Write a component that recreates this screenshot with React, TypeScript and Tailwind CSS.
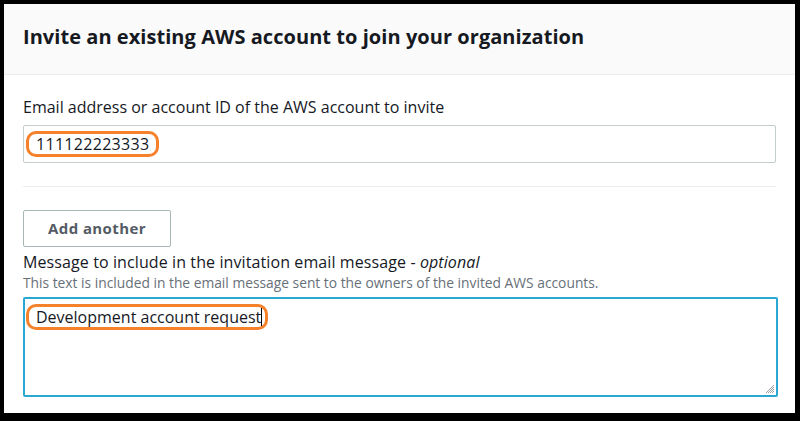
import React from "react";

const font = { fontFamily: '"Open Sans", "Noto Sans", Arial, sans-serif' };

export default function App() {
  return (
    <div
      className="w-[800px] h-[421px] bg-white border-t-4 border-l-4 border-r-[5px] border-b-[8px] border-black overflow-hidden text-[#16191f]"
      style={font}
    >
      {/* Header */}
      <div className="h-[71px] bg-[#fafafa] border-b border-[#eaeded] flex items-center px-[19px] pb-[5px]">
        <h2 className="text-[20px] font-bold tracking-[0.05px]">
          Invite an existing AWS account to join your organization
        </h2>
      </div>

      {/* Body */}
      <div className="px-[19px] pt-[21px]">
        <label className="block text-[16px] leading-[22px]">
          Email address or account ID of the AWS account to invite
        </label>
        <div className="mt-[7px] h-[38px] w-[753px] border border-[#c4cccd] rounded-[2px] flex items-center pl-[2px]">
          <span className="inline-flex items-center h-[26px] px-[7px] border-[3px] border-[#f5822a] rounded-[10px] text-[16px] tracking-[0.3px]">
            111122223333
          </span>
        </div>

        <div className="mt-[23px] h-px w-[753px] bg-[#eaeded]" />

        <button className="mt-[23px] h-[37px] w-[148px] border border-[#aab7b8] rounded-[2px] bg-white text-[15px] font-bold text-[#545b64] tracking-[0.4px]">
          Add another
        </button>

        <div className="mt-[3px] text-[16px] leading-[24px] tracking-[0.1px]">
          Message to include in the invitation email message - <i>optional</i>
        </div>
        <div className="text-[13.8px] leading-[18px] text-[#687078]">
          This text is included in the email message sent to the owners of the invited AWS accounts.
        </div>

        <div className="relative mt-[5px] h-[100px] w-[755px] border-2 border-[#29a8d4] rounded-[2px] pt-[5px] pl-[1px]">
          <span className="inline-flex items-center h-[26px] pl-[7px] pr-[3px] border-[3px] border-[#f5822a] rounded-[10px] text-[16px]">
            Development account request
            <span className="inline-block w-px h-[18px] bg-black" />
          </span>
          <svg className="absolute right-[1px] bottom-[1px]" width="10" height="10" viewBox="0 0 10 10">
            <path d="M9 1L1 9M9 3L3 9M9 5L5 9M9 7L7 9" stroke="#9aa3a4" strokeWidth="1" />
          </svg>
        </div>
      </div>
    </div>
  );
}
